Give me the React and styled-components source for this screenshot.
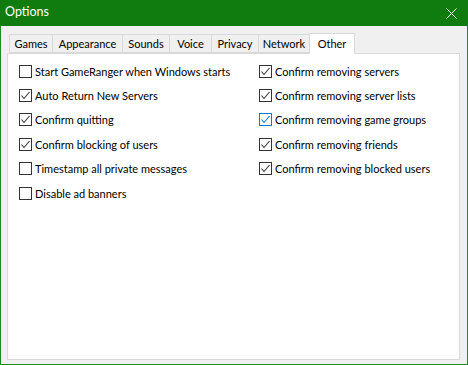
import React from "react";
import styled, { createGlobalStyle } from "styled-components";

const GlobalStyle = createGlobalStyle`
  html, body {
    margin: 0;
    padding: 0;
    background: #f0f0f0;
  }
  body {
    font-family: Lato, "Noto Sans", sans-serif;
    font-size: 11px;
    color: #000;
  }
`;

const tabs = [
  { name: "Games", width: 44 },
  { name: "Appearance", width: 71 },
  { name: "Sounds", width: 48 },
  { name: "Voice", width: 43 },
  { name: "Privacy", width: 48 },
  { name: "Network", width: 52 },
  { name: "Other", width: 46, active: true },
];

const leftOptions = [
  { label: "Start GameRanger when Windows starts", checked: false },
  { label: "Auto Return New Servers", checked: true },
  { label: "Confirm quitting", checked: true },
  { label: "Confirm blocking of users", checked: true },
  { label: "Timestamp all private messages", checked: false },
  { label: "Disable ad banners", checked: false },
];

const rightOptions = [
  { label: "Confirm removing servers", checked: true },
  { label: "Confirm removing server lists", checked: true },
  { label: "Confirm removing game groups", checked: true, hover: true },
  { label: "Confirm removing friends", checked: true },
  { label: "Confirm removing blocked users", checked: true },
];

const Option = ({ label, checked, hover }) => (
  <Row>
    <Box hover={hover ? 1 : 0}>
      {checked && (
        <svg width="11" height="11" viewBox="0 0 11 11">
          <path
            d="M1.5 5.5 L4 8.5 L9.5 2"
            fill="none"
            stroke={hover ? "#0078d7" : "#333"}
            strokeWidth="1.1"
          />
        </svg>
      )}
    </Box>
    <Label>{label}</Label>
  </Row>
);

export default function App() {
  return (
    <>
      <GlobalStyle />
      <Frame>
        <TitleBar>
          <Title>Options</Title>
          <Close>
            <svg width="11" height="11" viewBox="0 0 11 11">
              <path d="M0.5 0.5 L10.5 10.5 M10.5 0.5 L0.5 10.5" stroke="#fff" strokeWidth="1" fill="none" />
            </svg>
          </Close>
        </TitleBar>
        <Body>
          <TabRow>
            {tabs.map((t) => (
              <Tab key={t.name} active={t.active ? 1 : 0} style={{ width: t.width }}>
                {t.name}
              </Tab>
            ))}
          </TabRow>
          <Panel>
            <Column>
              {leftOptions.map((o) => (
                <Option key={o.label} {...o} />
              ))}
            </Column>
            <Column>
              {rightOptions.map((o) => (
                <Option key={o.label} {...o} />
              ))}
            </Column>
          </Panel>
        </Body>
      </Frame>
    </>
  );
}

const Frame = styled.div`
  width: 468px;
  height: 365px;
  box-sizing: border-box;
  border: 1px solid #1f8a1f;
  border-top: none;
  display: flex;
  flex-direction: column;
  background: #f0f0f0;
`;

const TitleBar = styled.div`
  height: 26px;
  margin: 0 -1px;
  background: #107c10;
  display: flex;
  align-items: center;
  justify-content: space-between;
  padding: 0 11px 0 5px;
`;

const Title = styled.span`
  color: #fff;
  font-size: 12.5px;
  line-height: 1;
  margin-top: -1px;
`;

const Close = styled.div`
  display: flex;
  align-items: center;
`;

const Body = styled.div`
  flex: 1;
  display: flex;
  flex-direction: column;
  padding: 7px 7px 4px 6px;
`;

const TabRow = styled.div`
  display: flex;
  align-items: flex-end;
  height: 20px;
  padding-left: 2px;
  position: relative;
  z-index: 1;
`;

const Tab = styled.div`
  box-sizing: border-box;
  height: ${(p) => (p.active ? "21px" : "19px")};
  margin-left: -1px;
  margin-bottom: ${(p) => (p.active ? "-1px" : "0")};
  border: 1px solid #d9d9d9;
  border-bottom: ${(p) => (p.active ? "none" : "1px solid #d9d9d9")};
  background: ${(p) => (p.active ? "#fff" : "#f0f0f0")};
  display: flex;
  align-items: center;
  justify-content: center;
  padding-bottom: ${(p) => (p.active ? "2px" : "0")};
  white-space: nowrap;
  &:first-child {
    margin-left: 0;
  }
`;

const Panel = styled.div`
  flex: 1;
  background: #fff;
  border: 1px solid #d9d9d9;
  display: grid;
  grid-template-columns: 240px 1fr;
  align-content: start;
  padding: 5px 0 0 11px;
`;

const Column = styled.div`
  display: flex;
  flex-direction: column;
`;

const Row = styled.div`
  height: 24.4px;
  display: flex;
  align-items: center;
  gap: 3px;
`;

const Box = styled.div`
  width: 13px;
  height: 13px;
  box-sizing: border-box;
  border: 1px solid ${(p) => (p.hover ? "#0078d7" : "#333")};
  background: #fff;
  display: flex;
  align-items: center;
  justify-content: center;
  flex-shrink: 0;
`;

const Label = styled.span`
  font-size: 11px;
  line-height: 1;
  white-space: nowrap;
`;
